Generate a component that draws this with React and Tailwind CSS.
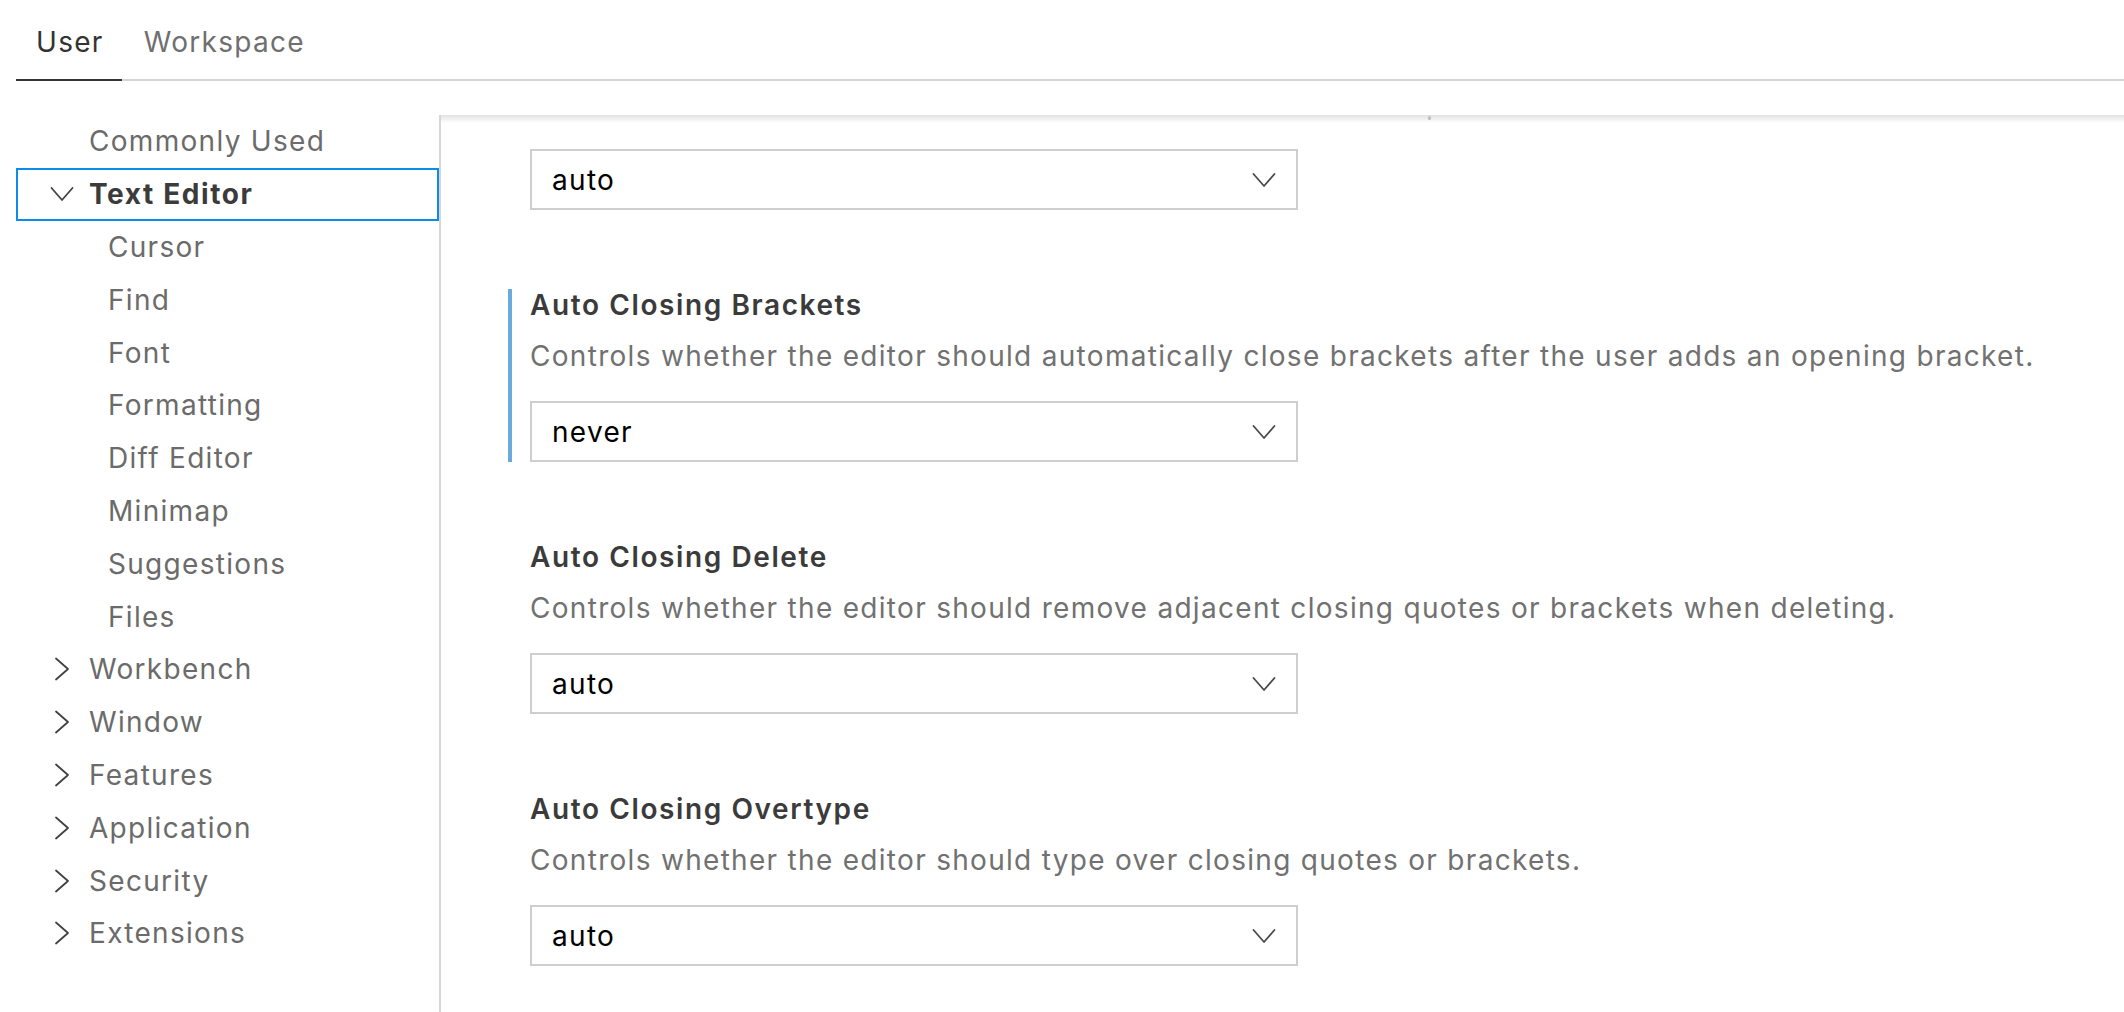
import React from 'react';

const ChevronRight = () => (
  <svg width="24" height="24" viewBox="0 0 24 24" fill="none" stroke="#424242" strokeWidth="1.8" strokeLinecap="round" strokeLinejoin="round">
    <polyline points="6,1.5 18,12 6,22.5" />
  </svg>
);

const ChevronDown = ({ color = '#424242' }) => (
  <svg width="24" height="24" viewBox="0 0 24 24" fill="none" stroke={color} strokeWidth="1.8" strokeLinecap="round" strokeLinejoin="round">
    <polyline points="1.5,6 12,18 22.5,6" />
  </svg>
);

const navItems = [
  { label: 'Commonly Used', level: 0 },
  { label: 'Text Editor', level: 0, open: true, selected: true },
  { label: 'Cursor', level: 1 },
  { label: 'Find', level: 1 },
  { label: 'Font', level: 1 },
  { label: 'Formatting', level: 1 },
  { label: 'Diff Editor', level: 1 },
  { label: 'Minimap', level: 1 },
  { label: 'Suggestions', level: 1 },
  { label: 'Files', level: 1 },
  { label: 'Workbench', level: 0, closed: true },
  { label: 'Window', level: 0, closed: true },
  { label: 'Features', level: 0, closed: true },
  { label: 'Application', level: 0, closed: true },
  { label: 'Security', level: 0, closed: true },
  { label: 'Extensions', level: 0, closed: true },
];

// the first entry is scrolled mostly out of view, only its select shows
const settings = [
  {
    id: 'accessibility',
    title: '',
    desc: 'Controls whether the editor should run in a mode where it is optimized for screen readers.',
    value: 'auto',
  },
  {
    id: 'brackets',
    title: 'Auto Closing Brackets',
    desc: 'Controls whether the editor should automatically close brackets after the user adds an opening bracket.',
    value: 'never',
    focused: true,
  },
  {
    id: 'delete',
    title: 'Auto Closing Delete',
    desc: 'Controls whether the editor should remove adjacent closing quotes or brackets when deleting.',
    value: 'auto',
  },
  {
    id: 'overtype',
    title: 'Auto Closing Overtype',
    desc: 'Controls whether the editor should type over closing quotes or brackets.',
    value: 'auto',
  },
];

const SettingItem = ({ item }) => (
  <div className="pb-[79px]">
    <div className={`border-l-4 pl-[18px] ${item.focused ? 'border-[#6aabdd]' : 'border-transparent'}`}>
      <div className="h-[32px] leading-[32px] font-semibold tracking-[1.6px] text-[#3b3b3b] whitespace-nowrap">{item.title}</div>
      <div className="mt-[19px] h-[32px] leading-[32px] text-[#717171] whitespace-nowrap">{item.desc}</div>
      <div className="mt-[29px] w-[768px] h-[61px] border-2 border-[#cecece] bg-white flex items-center justify-between pl-[20px] pr-[20px]">
        <span className="text-black">{item.value}</span>
        <ChevronDown color="#4a4a4a" />
      </div>
    </div>
  </div>
);

export default function App() {
  return (
    <div className="w-[2124px] h-[1012px] bg-white overflow-hidden flex flex-col text-[28px] tracking-[1.3px]" style={{ fontFamily: 'Inter, "Liberation Sans", sans-serif' }}>
      {/* tabs */}
      <div className="ml-[16px] h-[81px] border-b-2 border-[#d6d6d6] flex items-stretch shrink-0">
        <div className="pl-[20px] pr-[18px] pt-[21px] -mb-[2px] border-b-2 border-[#333333] text-[#333333]">User</div>
        <div className="px-[22px] pt-[21px] text-[#6f6f6f]">Workspace</div>
      </div>

      <div className="mt-[34px] flex flex-1 min-h-0">
        {/* sidebar */}
        <div className="w-[441px] shrink-0 border-r-2 border-[#d6d6d6]">
          {navItems.map((n) => (
            <div
              key={n.label}
              className={`ml-[16px] h-[52.8px] border-2 flex items-center ${n.selected ? 'border-[#0a8de6]' : 'border-transparent'} ${n.level === 1 ? 'pl-[90px]' : 'pl-[32px]'}`}
            >
              {n.level === 0 && (
                <div className="w-[24px] h-[24px] mr-[15px] flex items-center justify-center">
                  {n.open && <ChevronDown />}
                  {n.closed && <ChevronRight />}
                </div>
              )}
              <span className={n.selected ? 'font-bold tracking-[1.6px] text-[#3b3b3b]' : 'text-[#6b6b6b]'}>{n.label}</span>
            </div>
          ))}
        </div>

        {/* settings list */}
        <div className="relative flex-1 overflow-hidden">
          <div className="ml-[67px] -mt-[78px]">
            {settings.map((s) => (
              <SettingItem key={s.id} item={s} />
            ))}
          </div>
          <div className="absolute top-0 left-0 right-0 h-[8px] bg-gradient-to-b from-[#e2e2e2] to-transparent" />
        </div>
      </div>
    </div>
  );
}
